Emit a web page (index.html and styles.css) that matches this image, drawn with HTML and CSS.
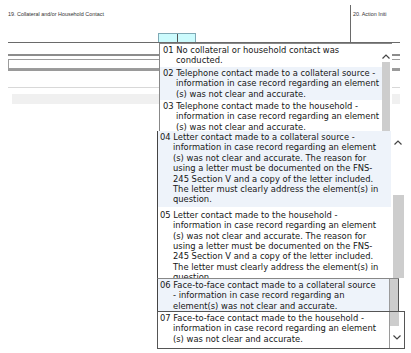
FILE: index.html
```html
<!DOCTYPE html>
<html lang="en">
<head>
    <meta charset="UTF-8">
    <title>Collateral Contact</title>
    <link rel="stylesheet" href="styles.css">
</head>
<body>
    <div class="form">
        <div class="head-row">
            <div class="cell-19">
                <div class="tiny-label">19. Collateral and/or Household Contact</div>
                <div class="code-box"><span></span><span></span></div>
            </div>
            <div class="cell-20">
                <div class="tiny-label">20. Action Initi</div>
            </div>
        </div>
        <div class="gap-row"></div>
        <div class="input-row"><div class="text-input"></div></div>
        <div class="light-rule"></div>
        <div class="shade-row"></div>
    </div>

    <!-- first capture of the list -->
    <div class="drop drop-a">
        <div class="opts">
            <div class="opt">01 No collateral or household contact was<br>conducted.</div>
            <div class="opt hl">02 Telephone contact made to a collateral source -<br>information in case record regarding an element<br>(s) was not clear and accurate.</div>
            <div class="opt">03 Telephone contact made to the household -<br>information in case record regarding an element<br>(s) was not clear and accurate.</div>
        </div>
        <div class="sbar">
            <div class="arrow"><svg width="8" height="5" viewBox="0 0 8 5"><polyline points="0.5,4.5 4,1 7.5,4.5" fill="none" stroke="#444" stroke-width="1.2"/></svg></div>
            <div class="thumb"></div>
        </div>
    </div>

    <!-- second capture, scrolled further down -->
    <div class="drop drop-b">
        <div class="opts">
            <div class="opt hl">04 Letter contact made to a collateral source -<br>information in case record regarding an element<br>(s) was not clear and accurate. The reason for<br>using a letter must be documented on the FNS-<br>245 Section V and a copy of the letter included.<br>The letter must clearly address the element(s) in<br>question.</div>
            <div class="opt">05 Letter contact made to the household -<br>information in case record regarding an element<br>(s) was not clear and accurate. The reason for<br>using a letter must be documented on the FNS-<br>245 Section V and a copy of the letter included.<br>The letter must clearly address the element(s) in<br>question.</div>
        </div>
        <div class="sbar">
            <div class="arrow"><svg width="8" height="5" viewBox="0 0 8 5"><polyline points="0.5,4.5 4,1 7.5,4.5" fill="none" stroke="#444" stroke-width="1.2"/></svg></div>
            <div class="thumb"></div>
        </div>
    </div>

    <div class="drop drop-c">
        <div class="opts">
            <div class="opt hl">06 Face-to-face contact made to a collateral source<br>- information in case record regarding an<br>element(s) was not clear and accurate.</div>
        </div>
        <div class="sbar"><div class="thumb"></div></div>
    </div>

    <div class="drop drop-d">
        <div class="opts">
            <div class="opt">07 Face-to-face contact made to the household -<br>information in case record regarding an element<br>(s) was not clear and accurate.</div>
        </div>
        <div class="sbar">
            <div class="thumb"></div>
            <div class="arrow down"><svg width="8" height="5" viewBox="0 0 8 5"><polyline points="0.5,0.5 4,4 7.5,0.5" fill="none" stroke="#444" stroke-width="1.2"/></svg></div>
        </div>
    </div>
</body>
</html>
```

FILE: styles.css
```css
* {
    margin: 0;
    padding: 0;
    box-sizing: border-box;
}

body {
    width: 411px;
    height: 353px;
    overflow: hidden;
    background: #fff;
    position: relative;
    font-family: 'DejaVu Sans Condensed', 'DejaVu Sans', sans-serif;
    color: #161616;
}

/* form behind the list */
.form {
    margin-left: 8px;
    width: 392px;
}

.head-row {
    display: flex;
    height: 43px;
    border-bottom: 1px solid #6a6a6a;
}

.cell-19 {
    width: 342px;
    display: flex;
    flex-direction: column;
    justify-content: space-between;
}

.cell-20 {
    flex: 1;
    border-left: 1px solid #6a6a6a;
    margin-top: 5px;
}

.tiny-label {
    font-family: 'Liberation Sans', sans-serif;
    font-size: 5.4px;
    color: #333;
    padding-top: 11px;
}

.cell-20 .tiny-label {
    padding-top: 6px;
    padding-left: 2px;
}

.code-box {
    display: flex;
    margin-left: 150px;
    width: 38px;
    height: 9px;
    border: 1px solid #7fa9b5;
    border-bottom: none;
    background: #ccfbfd;
}

.code-box span {
    flex: 1;
}

.code-box span:first-child {
    border-right: 1px solid #555;
}

.gap-row {
    height: 13px;
    border-bottom: 2px solid #8c8c8c;
}

.input-row {
    height: 15px;
    padding-top: 3px;
    border-bottom: 2px solid #9a9a9a;
}

.text-input {
    height: 10px;
    border: 1px solid #9c9c9c;
    border-right: none;
}

.light-rule {
    height: 17px;
    border-bottom: 1px solid #d8d8d8;
}

.shade-row {
    margin: 6px 0 0 4px;
    height: 10px;
    background: #f0f0f0;
}

/* dropdown captures */
.drop {
    position: absolute;
    display: flex;
    background: #fff;
    border: 1px solid #888;
    font-size: 9.3px;
    line-height: 10.4px;
    overflow: hidden;
}

.drop-a {
    left: 159px;
    top: 43px;
    width: 233px;
    height: 89px;
    border-right: none;
    border-bottom: none;
}

.drop-b {
    left: 157px;
    top: 131px;
    width: 260px;
    height: 147px;
    border-top: none;
    border-right: none;
    border-bottom: none;
    border-left-color: #444;
}

.drop-c {
    left: 157px;
    top: 278px;
    width: 242px;
    height: 34px;
    border-left-color: #444;
    border-right: none;
}

.drop-d {
    left: 157px;
    top: 311px;
    width: 248px;
    height: 38px;
    border-color: #555;
}

.opts {
    flex: 1;
    overflow: hidden;
}

.opt {
    white-space: nowrap;
    padding: 1px 0 1px 16px;
    text-indent: -13px;
}

.opt.hl {
    background: #eef3fa;
}

.drop-b .opts {
    flex: 0 0 233px;
}

.drop-b .opt,
.drop-c .opt,
.drop-d .opt {
    padding-left: 15px;
    text-indent: -13px;
}

.drop-b .opt {
    padding-top: 1px;
    padding-bottom: 2px;
}

.drop-b .opt + .opt {
    padding-top: 3px;
}

.drop-c .opts,
.drop-d .opts {
    flex: 0 0 232px;
    border-right: 1px solid #9a9a9a;
}

.drop-c .opt,
.drop-d .opt {
    padding-top: 1px;
}

.sbar {
    display: flex;
    flex-direction: column;
    width: 12px;
}

.drop-a .sbar {
    width: 11px;
    margin-right: -1px;
}

.drop-b .sbar {
    padding-left: 2px;
}

.arrow {
    height: 18px;
    display: flex;
    justify-content: center;
    align-items: center;
}

.drop-a .arrow {
    padding-right: 3px;
    padding-top: 6px;
}

.drop-b .arrow {
    padding-top: 4px;
}

.arrow.down {
    height: 22px;
}

.thumb {
    flex: 1;
    background: #cdcdcd;
}

.drop-a .thumb {
    margin-right: 3px;
}

.drop-b .thumb {
    margin-top: 46px;
    width: 11px;
}

.drop-c .sbar {
    width: 9px;
    border-right: 1px solid #555;
}

.drop-d .sbar {
    width: 16px;
}

.drop-d .thumb {
    flex: 0 0 14px;
    width: 9px;
}
```
